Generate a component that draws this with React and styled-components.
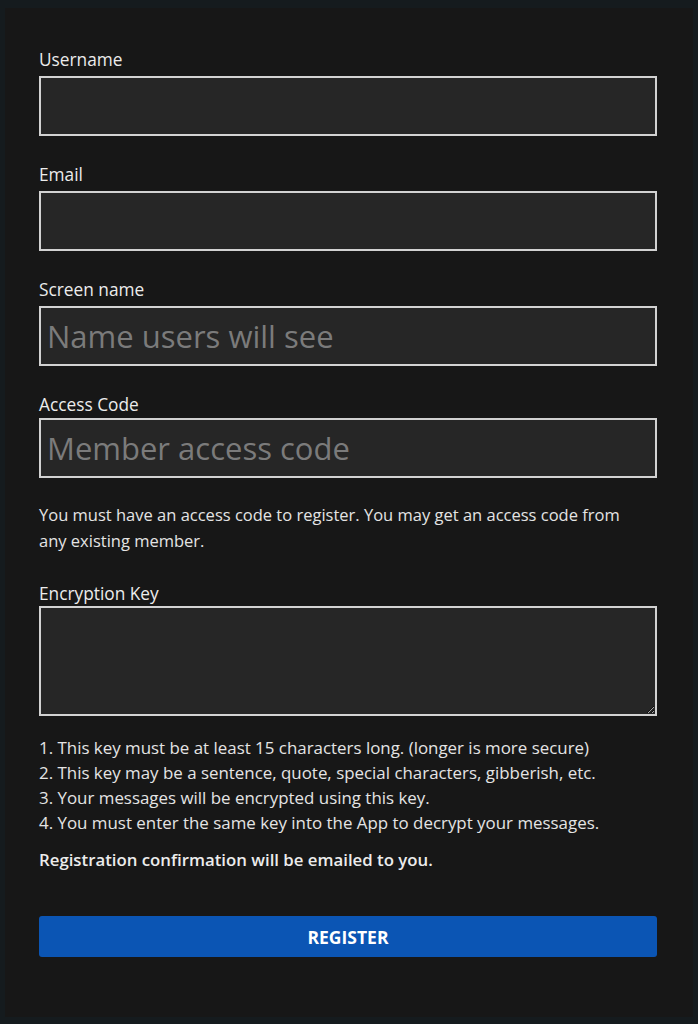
import React from 'react';
import styled, { createGlobalStyle } from 'styled-components';

const GlobalStyle = createGlobalStyle`
  body {
    margin: 0;
    background: #151b1e;
    font-family: 'Open Sans', 'Noto Sans', sans-serif;
  }
`;

const Page = styled.div`
  padding: 8px 5px 7px 5px;
`;

const Card = styled.form`
  background: #171717;
  padding: 40px 36px 60px 34px;
  display: flex;
  flex-direction: column;
  color: #e8e8e8;
`;

const Field = styled.div`
  display: flex;
  flex-direction: column;
  margin-bottom: ${(p) => p.$gap ?? 27}px;
`;

const Label = styled.label`
  font-size: 17.3px;
  line-height: 24px;
  color: #ececec;
  margin-bottom: ${(p) => p.$space ?? 4}px;
`;

const Input = styled.input`
  box-sizing: border-box;
  height: 60px;
  width: 100%;
  background: #262626;
  border: 2px solid #d2d2d2;
  border-radius: 0;
  padding: 0 6px;
  font-family: inherit;
  font-size: 31px;
  color: #e8e8e8;
  outline: none;

  &::placeholder {
    color: #7b7b7b;
  }
`;

const TextArea = styled.textarea`
  box-sizing: border-box;
  height: 110px;
  width: 100%;
  background: #262626;
  border: 2px solid #d2d2d2;
  border-radius: 0;
  padding: 6px;
  font-family: inherit;
  font-size: 16px;
  color: #e8e8e8;
  outline: none;
  resize: vertical;
  display: block;
`;

const Help = styled.p`
  margin: 0 0 28px;
  padding-right: 14px;
  font-size: 16.5px;
  line-height: 26px;
  color: #e4e4e4;
`;

const Steps = styled.ol`
  margin: 19px 0 12px;
  padding: 0;
  list-style: none;
  font-size: 16.9px;
  line-height: 25px;
  color: #e4e4e4;
`;

const Note = styled.p`
  margin: 0 0 44px;
  font-size: 16.8px;
  line-height: 25px;
  font-weight: 600;
  color: #ececec;
`;

const Button = styled.button`
  height: 41px;
  width: 100%;
  border: none;
  border-radius: 3px;
  background: #0b55b4;
  color: #ffffff;
  font-family: inherit;
  font-size: 17.5px;
  font-weight: 700;
  cursor: pointer;
`;

const steps = [
  'This key must be at least 15 characters long. (longer is more secure)',
  'This key may be a sentence, quote, special characters, gibberish, etc.',
  'Your messages will be encrypted using this key.',
  'You must enter the same key into the App to decrypt your messages.',
];

export default function App() {
  return (
    <Page>
      <GlobalStyle />
      <Card onSubmit={(e) => e.preventDefault()}>
        <Field>
          <Label htmlFor="username">Username</Label>
          <Input id="username" />
        </Field>
        <Field>
          <Label htmlFor="email">Email</Label>
          <Input id="email" type="email" />
        </Field>
        <Field>
          <Label htmlFor="screen">Screen name</Label>
          <Input id="screen" placeholder="Name users will see" />
        </Field>
        <Field $gap={24}>
          <Label htmlFor="code" $space={1}>Access Code</Label>
          <Input id="code" placeholder="Member access code" />
        </Field>
        <Help>
          You must have an access code to register. You may get an access code from any
          existing member.
        </Help>
        <Field $gap={0}>
          <Label htmlFor="key" $space={0}>Encryption Key</Label>
          <TextArea id="key" />
        </Field>
        <Steps>
          {steps.map((s, i) => (
            <li key={i}>
              {i + 1}. {s}
            </li>
          ))}
        </Steps>
        <Note>Registration confirmation will be emailed to you.</Note>
        <Button type="submit">REGISTER</Button>
      </Card>
    </Page>
  );
}
